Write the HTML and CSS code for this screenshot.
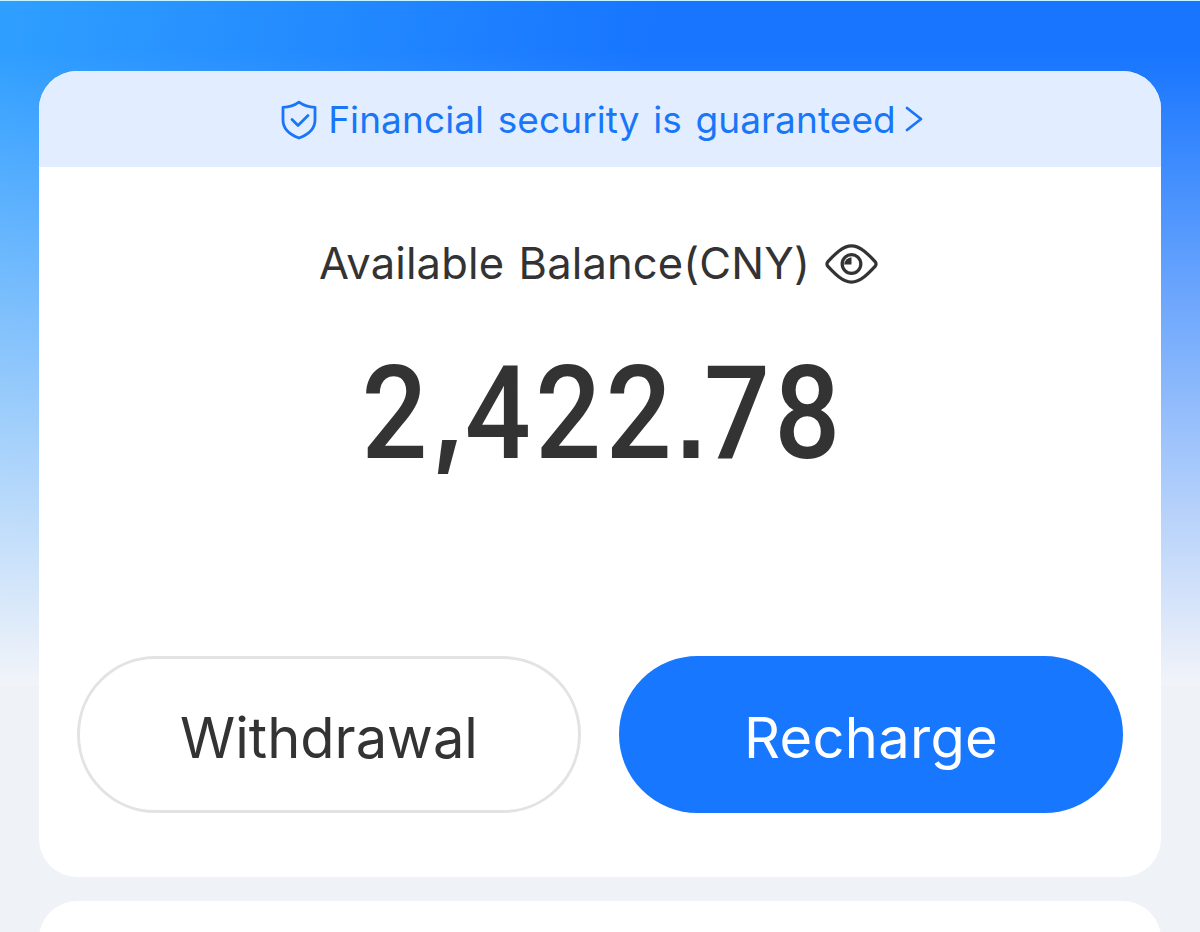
FILE: index.html
```html
<!DOCTYPE html>
<html lang="en">
<head>
    <meta charset="UTF-8">
    <meta name="viewport" content="width=device-width, initial-scale=1.0">
    <title>Available Balance</title>
    <link rel="stylesheet" href="styles.css">
</head>
<body>
    <div class="page">
        <div class="card wallet">
            <a class="security">
                <svg class="shield" viewBox="0 0 36 40" width="36" height="40">
                    <path d="M18 2.2C13.500 5.500 8 7.200 2 7.300V20C2 28.500 8.500 34.500 18 38C27.500 34.500 34 28.500 34 20V7.300C28 7.200 22.500 5.500 18 2.200Z"/>
                    <path d="M11 19.500L17 25.500L27 15.500"/>
                </svg>
                <span>Financial security is guaranteed</span>
                <svg class="arrow" viewBox="0 0 18 26" width="18" height="26">
                    <path d="M2 2L16 13L2 24"/>
                </svg>
            </a>
            <div class="label">
                <span>Available Balance(CNY)</span>
                <svg class="eye" viewBox="0 0 54 42" width="53" height="42">
                    <path d="M3 18.500C10 11 18 2.500 27 2.500S44 11 51 18.500Q53 21 51 23.500C44 31 36 39.500 27 39.500S10 31 3 23.500Q1 21 3 18.500Z"/>
                    <circle cx="27" cy="21" r="9.500"/>
                    <path class="pupil" d="M27 21.500V14A8 8 0 0 0 19.500 21.500Z"/>
                </svg>
            </div>
            <div class="amount">2<span class="comma">,</span>422<span class="dot">.</span>78</div>
            <div class="buttons">
                <button class="btn withdrawal"><span>Withdrawal</span></button>
                <button class="btn recharge"><span>Recharge</span></button>
            </div>
        </div>
        <div class="card next"></div>
    </div>
</body>
</html>
```
FILE: styles.css
```css
*{
    box-sizing: border-box;
}
body{
    margin: 0;
    background-color: #eff2f7;
    font-family: Inter, "Liberation Sans", sans-serif;
    color: #333;
}
.page{
    height: 932px;
    overflow: hidden;
    display: flex;
    flex-direction: column;
    gap: 24px;
    padding: 70px 39px 0;
    border-top: 1px solid #c2f5ff;
    background-image: linear-gradient(to bottom, rgba(242,244,249,0) 50px, #f2f4f9 100%), linear-gradient(100deg, #2f9fff 0%, #1775ff 50%);
    background-size: 100% 684px;
    background-repeat: no-repeat;
}
.card{
    flex: none;
    background-color: #fff;
    border-radius: 38px;
    overflow: hidden;
}
.wallet{
    height: 806px;
}
.security{
    display: flex;
    justify-content: center;
    align-items: center;
    height: 96px;
    padding-left: 4px;
    background-color: #e2eeff;
    color: #1a76f8;
    font-size: 37px;
    font-weight: 400;
    letter-spacing: 0.1px;
    word-spacing: 3px;
    white-space: nowrap;
}
.security span{
    margin: 1px 9px 0 11px;
}
svg{
    flex: none;
    fill: none;
    stroke: currentColor;
    stroke-linecap: round;
    stroke-linejoin: round;
}
.shield{
    margin-top: 1px;
    stroke-width: 2.800;
}
.arrow{
    stroke-width: 2.800;
}
.label{
    display: flex;
    justify-content: center;
    align-items: center;
    gap: 15px;
    height: 60px;
    margin-top: 66px;
    padding-right: 3px;
    font-size: 43.500px;
    font-weight: 400;
    letter-spacing: 0.15px;
    word-spacing: 2px;
    white-space: nowrap;
}
.label span{
    margin-top: -1px;
}
.eye{
    margin-top: 1px;
    stroke-width: 3.300;
}
.pupil{
    fill: currentColor;
    stroke: none;
}
.amount{
    height: 150px;
    margin-top: 46px;
    line-height: 150px;
    text-align: center;
    font-family: Roboto, sans-serif;
    font-size: 129px;
    font-weight: 500;
    letter-spacing: 5px;
    text-indent: 7px;
    /* narrow digits */
    transform: scaleX(0.9);
}
.comma{
    position: relative;
    top: -6px;
    font-family: Inter, sans-serif;
    font-size: 112px;
    font-weight: 700;
    line-height: 1;
    letter-spacing: -1px;
}
.dot{
    font-family: "Liberation Sans", sans-serif;
    font-size: 118px;
    font-weight: 700;
    line-height: 1;
    letter-spacing: -2px;
}
.buttons{
    display: flex;
    gap: 38px;
    margin-top: 167px;
    padding: 0 38px;
}
.btn{
    flex: 1;
    height: 157px;
    padding: 6px 0 0;
    border: 3px solid #e3e3e3;
    border-radius: 79px;
    background-color: #fff;
    color: #333;
    font-family: inherit;
    font-size: 56px;
    font-weight: 400;
}
.recharge{
    border-color: #1777ff;
    background-color: #1777ff;
    color: #fff;
    letter-spacing: 0.3px;
}
.next{
    height: 120px;
}
```
